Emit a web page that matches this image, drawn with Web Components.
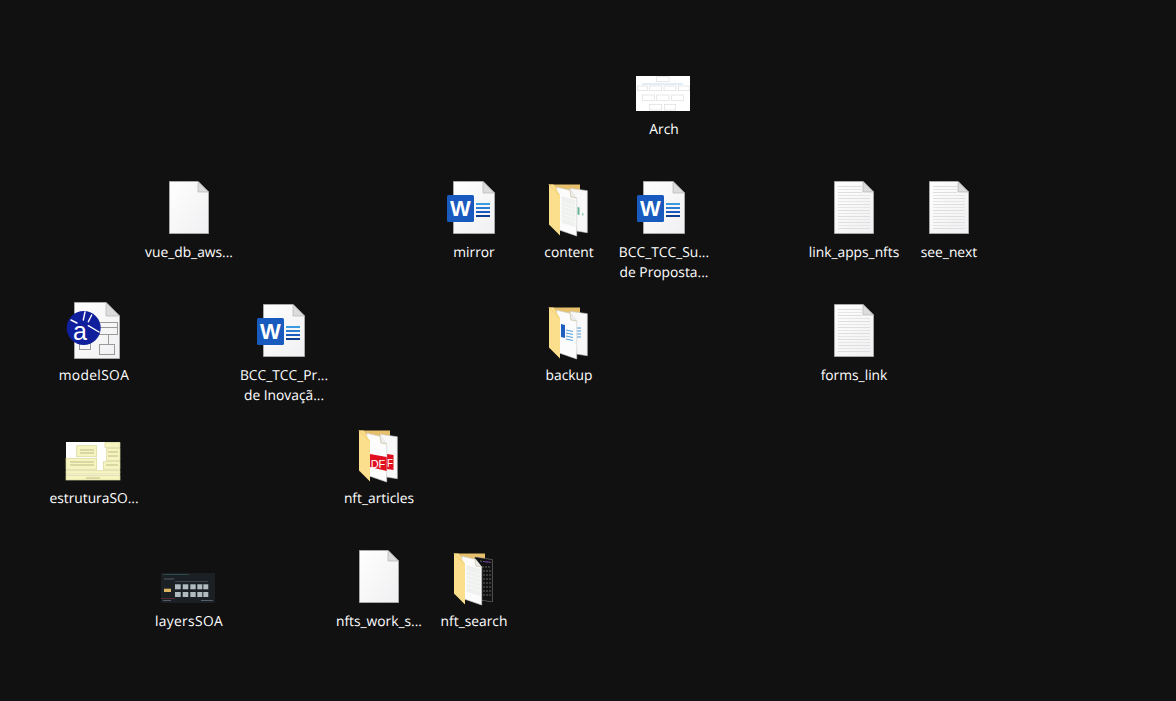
<!DOCTYPE html>
<html lang="pt"><head><meta charset="utf-8"><title>Desktop</title>
<style>html,body{margin:0;height:100%;background:#111}</style></head>
<body>
<desk-top>
<desk-icon col="7" row="1" kind="arch">Arch</desk-icon>
<desk-icon col="2" row="2" kind="blank">vue_db_aws...</desk-icon>
<desk-icon col="5" row="2" kind="word">mirror</desk-icon>
<desk-icon col="6" row="2" kind="content">content</desk-icon>
<desk-icon col="7" row="2" kind="word">BCC_TCC_Su...<br>de Proposta...</desk-icon>
<desk-icon col="9" row="2" kind="text">link_apps_nfts</desk-icon>
<desk-icon col="10" row="2" kind="text">see_next</desk-icon>
<desk-icon col="1" row="3" kind="model" wide>modelSOA</desk-icon>
<desk-icon col="3" row="3" kind="word">BCC_TCC_Pr...<br>de Inovaçã...</desk-icon>
<desk-icon col="6" row="3" kind="backup">backup</desk-icon>
<desk-icon col="9" row="3" kind="text">forms_link</desk-icon>
<desk-icon col="1" row="4" kind="estrutura">estruturaSO...</desk-icon>
<desk-icon col="4" row="4" kind="pdf">nft_articles</desk-icon>
<desk-icon col="2" row="5" kind="layers" wide>layersSOA</desk-icon>
<desk-icon col="4" row="5" kind="blank">nfts_work_s...</desk-icon>
<desk-icon col="5" row="5" kind="search">nft_search</desk-icon>
</desk-top>
<script>
const page=(x1,y1,x2,y2,f,inner='')=>`
<path d="M${x1+.5} ${y1+.5}H${x2-f}L${x2-.5} ${y1+f}V${y2-.5}H${x1+.5}Z" fill="url(#pg)" stroke="#a9a9a9"/>
${inner}
<path d="M${x2-f} ${y1+.5}V${y1+f}H${x2-.5}Z" fill="#dcdcdc" stroke="#b5b5b5" stroke-width=".7"/>`;
const defs=`<defs><linearGradient id="pg" x1="0" y1="0" x2="1" y2="1"><stop offset="0" stop-color="#fff"/><stop offset="1" stop-color="#f0f0f2"/></linearGradient><filter id="soft" x="-5%" y="-5%" width="110%" height="110%"><feGaussianBlur stdDeviation=".45"/></filter></defs>`;
const textLines=()=>{let s='';for(let y=10;y<=54;y+=3)s+=`<path d="M16 ${y}.5H${y<18?40:48}" stroke="${y%2?'#e6e6e6':'#dedede'}"/>`;return s};
const word=()=>page(11,5,53,58,12,`
<path d="M34 28H48" stroke="#3a9be0" stroke-width="2"/><path d="M34 32H48" stroke="#2b7cd3" stroke-width="2"/><path d="M34 36H48" stroke="#185abd" stroke-width="2"/><path d="M34 40H48" stroke="#103f91" stroke-width="2"/>
<rect x="5" y="19" width="27" height="27" rx="1.5" fill="#185abd"/>
<text x="18.5" y="40" text-anchor="middle" font-family="Liberation Sans,sans-serif" font-weight="700" font-size="22" fill="#fff">W</text>`);
const folder=(rear,front)=>`
<path d="M12 8.5H43V20H12Z" fill="#e6c06c"/>
<path d="M33 12.3L50.3 14.7V56.7L39.7 55Z" fill="#f8f8f8" stroke="#c8c8c8" stroke-width=".6"/>${rear}
<path d="M19.7 11.3L34 14.5L39.7 22V60L22.3 54Z" fill="#fcfcfc" stroke="#cfcfcf" stroke-width=".6"/>
<path d="M33 14.5L34 21L39.7 22" fill="#ececec" stroke="#c9bd98" stroke-width=".7"/>${front}
<path d="M12 8.5H16.5L23 19V59.5L13 49.5Q12 49 12 48Z" fill="#fbdf8c"/>
<path d="M12 8.5L22.5 19" stroke="#f0cc72"/>`;
const checker=`<path d="M24.5 20L38.5 24V51L24.5 47Z" fill="#eff1ef"/><path d="M25 26L38 30M25 30L38 34M25 34L38 38M25 38L38 42M25 42L38 46" stroke="#f8f8f8"/>`;
const thumb=(x,y,w,h,bg,inner)=>`<rect x="${x}" y="${y}" width="${w}" height="${h}" fill="${bg}"/><g transform="translate(${x} ${y})">${inner}</g>`;
const box=(a,b,c,d,fill='#fff',st='#dedede')=>`<rect x="${a}" y="${b}" width="${c-a}" height="${d-b}" fill="${fill}" ${st?`stroke="${st}" stroke-width=".7"`:''}/>`;
const icons={
 blank:()=>page(12,5,52,58,11),
 text:()=>page(12,5,52,58,11,textLines()),
 word,
 content:()=>folder(`<path d="M40.5 31L42.5 31.5V39L40.5 38.5Z" fill="#5fb58f"/><path d="M45 37L46.5 37.3V39.5L45 39.2Z" fill="#8fcfae"/>`,checker),
 backup:()=>folder(`<path d="M40 29H44M40 32H44M40 35H44M40 38H44" stroke="#4d9ad6"/>`,`<path d="M24 25L28 26V39L24 38Z" fill="#1e5fbf"/><path d="M29 31L36 32.5M29 34L36 35.5M29 37L36 38.5M29 40L36 41.5" stroke="#5aa3dc" stroke-width="1.2"/>`),
 pdf:()=>folder(`<path d="M40 32L46.5 33V48L40 47Z" fill="#e01020"/><text x="43" y="45" text-anchor="middle" font-family="Liberation Sans,sans-serif" font-size="10" fill="#fff">F</text>`,`<path d="M23 32L39.7 35V49L23 45Z" fill="#e01020"/><text x="31" y="46" text-anchor="middle" font-family="Liberation Sans,sans-serif" font-size="11" fill="#fff">DF</text>`),
 search:()=>folder(`<path d="M33 12.3L50.3 14.7V56.7L39.7 55Z" fill="#111" stroke="#333" stroke-width=".6"/><path d="M38 16L49 17.5M40 22H49M41 26H49M41 30H49M41 34H49M41 38H49M41 42H49M41 46H49M41 50H49" stroke="#666" stroke-dasharray="2 1"/><path d="M42 16.5L48 17.2" stroke="#6a2a9a"/>`,checker),
 model:()=>page(12,3,58,60,14,`
<rect x="37.5" y="23.5" width="18" height="12" fill="none" stroke="#9a9a9a"/><path d="M37 28.5H56" stroke="#9a9a9a"/><path d="M46.5 36V45" stroke="#9a9a9a"/>
<rect x="37.5" y="45.5" width="15" height="10" fill="none" stroke="#9a9a9a"/><rect x="17.5" y="42.5" width="11" height="8" fill="none" stroke="#9a9a9a"/>
<circle cx="21.7" cy="29" r="17" fill="#10209c"/>
<path d="M23 13L21.3 21M29.7 16L26.3 22.7M26.3 26.7L37 33M9 21L15 24" stroke="#fff" stroke-width="1.4" stroke-linecap="round"/>
<text x="18" y="41" text-anchor="middle" font-family="Liberation Sans,sans-serif" font-size="25" fill="#fff">a</text>`),
 arch:()=>thumb(4,23,54,35,'#fff',`<g filter="url(#soft)"><path d="M6 8H47" stroke="#c8dcee"/>`+[[20.7,.7,33,5.7],[1.3,10,11.3,14.7],[13.3,10,25.7,14.7],[28,10,40,14.7],[42.3,10,53.3,14.7],[6.7,19,18.3,24.7],[20.7,19,33,24.7],[35.7,19,47.3,24.7],[13.3,28.3,25.7,34],[28.3,28.3,39.7,34]].map(b=>box(...b,'#fff','#dcdcdc')).join('')+`</g>`),
 estrutura:()=>thumb(4,20,54,38,'#fff',`<g filter="url(#soft)">`+[[10.7,3.7,30.7,14.7],[39,.7,54,5.3],[40.7,6.3,54,18.7],[0,16.3,30.7,27.3],[37.3,19.7,54,27.3],[0,28.7,54,32],[0,33.3,54,38]].map(b=>box(...b,'#f7f5bf','#d8d59a')).join('')+`<path d="M14 8H28M14 11H28M4 20H28M4 23H28M42 10H52M42 14H52M40 23H52M20 36H34" stroke="#bdb98a"/></g>`),
 layers:()=>{let t='';for(const y of [11.3,19])for(const [a,b] of [[14,19.7],[21.7,27.3],[29.3,34.7],[36.3,41.3],[42.3,47.3]])t+=box(a,y,b,y+5,'#b0babf','');return thumb(4,28,54,30,'#1a2024',`<g filter="url(#soft)"><path d="M2 1.5H28" stroke="#2f4a48"/><path d="M3 6H13" stroke="#4a5c66"/><path d="M14 8.5H47" stroke="#3a464c"/>`+t+box(3,15.7,10,19,'#dcb45e','')+`<path d="M0 25.5H14" stroke="#5a2a30"/><path d="M2 27.5H10M40 27.5H52" stroke="#55606a"/></g>`)},
};
class DeskTop extends HTMLElement{
 constructor(){super();this.attachShadow({mode:'open'}).innerHTML=`<style>
 :host{display:grid;grid-template-columns:repeat(10,95px);grid-auto-rows:123px;padding:53px 0 0 46.5px;box-sizing:border-box;width:1176px;height:701px;background:#111;overflow:hidden;color:#fff;font:13.8px/20px "Open Sans",sans-serif}
 </style><slot></slot>`}
}
class DeskIcon extends HTMLElement{
 constructor(){super();this.attachShadow({mode:'open'})}
 connectedCallback(){
  this.style.gridColumn=this.getAttribute('col');this.style.gridRow=this.getAttribute('row');
  const k=this.getAttribute('kind');
  this.shadowRoot.innerHTML=`<style>
  :host{display:flex;flex-direction:column;align-items:center;min-width:0}
  :host([wide]) .label{letter-spacing:.35px}
  svg{display:block;width:64px;height:64px;flex:none}
  .label{margin-top:3px;text-align:center;white-space:nowrap;text-rendering:geometricPrecision}
  </style><svg viewBox="0 0 64 64" aria-hidden="true">${defs}${icons[k]()}</svg><div class="label"><slot></slot></div>`;
 }
}
customElements.define('desk-top',DeskTop);
customElements.define('desk-icon',DeskIcon);
</script>
</body></html>
